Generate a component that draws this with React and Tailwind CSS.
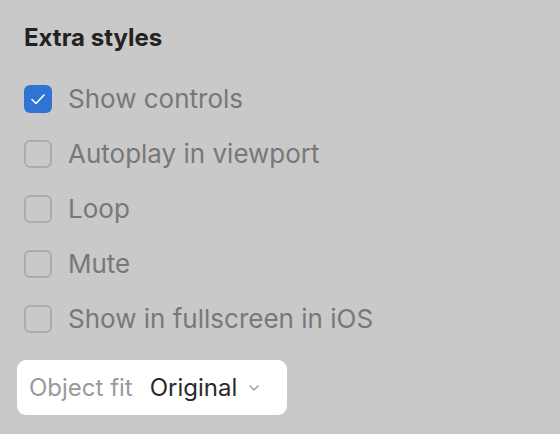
import React from "react";

const items = [
  { label: "Show controls", checked: true },
  { label: "Autoplay in viewport", checked: false },
  { label: "Loop", checked: false },
  { label: "Mute", checked: false },
  { label: "Show in fullscreen in iOS", checked: false },
];

function Box({ checked }) {
  if (checked) {
    return (
      <div className="w-[28px] h-[28px] rounded-[6px] bg-[#2f74d3] shrink-0">
        <svg width="28" height="28" viewBox="0 0 28 28" fill="none">
          <path d="M8 14.5l4 4 8-8.5" stroke="#fff" strokeWidth="1.6" strokeLinecap="round" strokeLinejoin="round" />
        </svg>
      </div>
    );
  }
  return <div className="w-[28px] h-[28px] rounded-[6px] border-2 border-[#acacac] shrink-0" />;
}

export default function App() {
  return (
    <div
      className="w-[560px] h-[434px] bg-[#c9c9c9] pt-[23px] pl-6 overflow-hidden"
      style={{ fontFamily: "Inter, 'Noto Sans', sans-serif" }}
    >
      <div className="h-[30px] leading-[30px] text-[24px] font-bold text-[#222]">Extra styles</div>
      <div className="mt-[18px] flex flex-col">
        {items.map((it) => (
          <div key={it.label} className="h-[55px] flex items-center gap-4">
            <Box checked={it.checked} />
            <span className="text-[26px] text-[#787878] leading-none">{it.label}</span>
          </div>
        ))}
      </div>
      <div className="mt-[14px] -ml-[7px] w-[270px] h-[55px] bg-white rounded-[9px] flex items-center pl-3">
        <span className="text-[24px] text-[#9a9a9a]">Object fit</span>
        <span className="ml-[17px] text-[24px] text-[#2a2a2a]">Original</span>
        <svg className="ml-3" width="10" height="6" viewBox="0 0 10 6" fill="none">
          <path d="M1 1l4 4 4-4" stroke="#a0a0a0" strokeWidth="1.5" strokeLinecap="round" strokeLinejoin="round" />
        </svg>
      </div>
    </div>
  );
}
